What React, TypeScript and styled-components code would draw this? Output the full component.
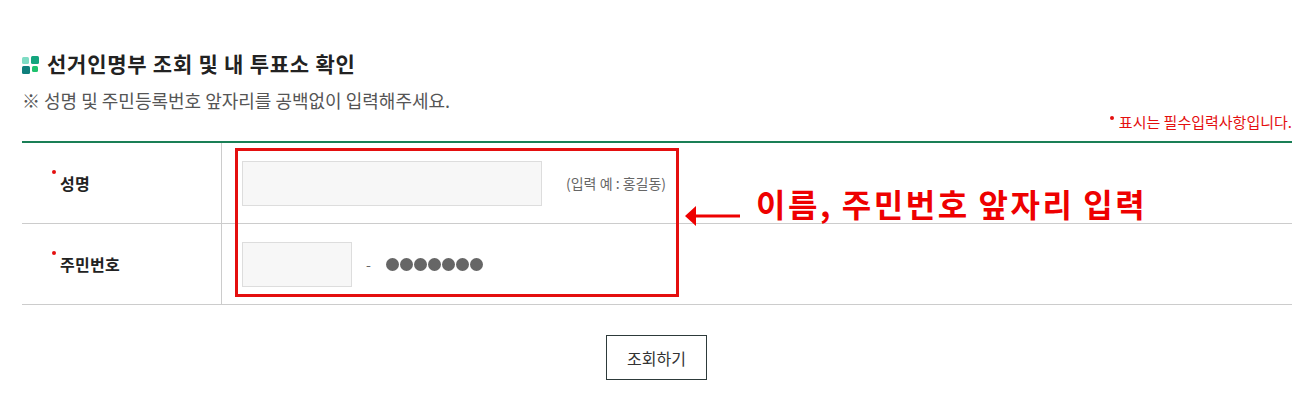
import styled, { createGlobalStyle } from 'styled-components';

const GlobalStyle = createGlobalStyle`
  html, body {
    margin: 0;
    padding: 0;
    background: #fff;
    font-family: "Noto Sans CJK KR", "Noto Sans", sans-serif;
  }
`;

export default function App() {
  return (
    <Page>
      <GlobalStyle />
      <Title>
        <TitleIcon viewBox="0 0 18 18">
          <rect x="0" y="1" width="7" height="7" rx="1.5" fill="#7fdcc4" />
          <rect x="9" y="0" width="8" height="8" rx="1.5" fill="#14a57e" />
          <rect x="0" y="10" width="8" height="8" rx="1.5" fill="#0f7f7c" />
          <rect x="10" y="10" width="6" height="6" rx="1.5" fill="#1ec26e" />
        </TitleIcon>
        선거인명부 조회 및 내 투표소 확인
      </Title>
      <Notice>※ 성명 및 주민등록번호 앞자리를 공백없이 입력해주세요.</Notice>
      <RequiredNote>
        <Dot />표시는 필수입력사항입니다.
      </RequiredNote>
      <FormTable>
        <Row>
          <LabelCell>
            <Dot />
            <LabelText>성명</LabelText>
          </LabelCell>
          <FieldCell>
            <TextBox $width={300} />
            <Hint>(입력 예 : 홍길동)</Hint>
          </FieldCell>
        </Row>
        <Row>
          <LabelCell>
            <Dot />
            <LabelText>주민번호</LabelText>
          </LabelCell>
          <FieldCell>
            <TextBox $width={110} />
            <Dash>-</Dash>
            <Masked>
              {[0, 1, 2, 3, 4, 5, 6].map((i) => (
                <MaskDot key={i} />
              ))}
            </Masked>
          </FieldCell>
        </Row>
        <Highlight />
        <Annotation>
          <ArrowIcon width="55" height="20" viewBox="0 0 55 20">
            <path d="M0 10 L11 0 V8.5 H55 V11.5 H11 V20 Z" fill="#ee0000" />
          </ArrowIcon>
          <AnnotationText>이름, 주민번호 앞자리 입력</AnnotationText>
        </Annotation>
      </FormTable>
      <Actions>
        <SearchButton>조회하기</SearchButton>
      </Actions>
    </Page>
  );
}

const Page = styled.div`
  width: 1270px;
  padding: 47px 8px 0 22px;
  height: 363px;
  overflow: hidden;
`;

const Title = styled.h2`
  display: flex;
  align-items: center;
  gap: 7px;
  margin: 0;
  height: 32px;
  font-size: 21px;
  line-height: 32px;
  font-weight: 700;
  color: #222;
  letter-spacing: 0.75px;
`;

const TitleIcon = styled.svg`
  width: 18px;
  height: 18px;
  margin-top: 4px;
`;

const Notice = styled.p`
  margin: 9px 0 0;
  height: 24px;
  font-size: 18px;
  line-height: 25px;
  color: #555;
`;

const RequiredNote = styled.div`
  display: flex;
  justify-content: flex-end;
  height: 29px;
  font-size: 15px;
  line-height: 20px;
  color: #e40f0f;
  box-sizing: border-box;
`;

const FormTable = styled.div`
  position: relative;
  border-top: 2px solid #1a7f56;
`;

const Row = styled.div`
  display: grid;
  grid-template-columns: 200px 1fr;
  height: 80px;
  border-bottom: 1px solid #ccc;
`;

const LabelCell = styled.div`
  display: flex;
  align-items: center;
  padding-left: 30px;
  border-right: 1px solid #ccc;
`;

const Dot = styled.span`
  display: inline-block;
  flex: none;
  width: 4px;
  height: 4px;
  margin: 0 2px 0 0;
  border-radius: 50%;
  background: #e40f0f;
  transform: translateY(-11px);

  ${RequiredNote} & {
    transform: translateY(4px);
    margin-right: 5px;
  }
`;

const LabelText = styled.span`
  margin-left: 2px;
  font-size: 16px;
  font-weight: 700;
  color: #222;
  letter-spacing: 0.3px;
`;

const FieldCell = styled.div`
  display: flex;
  align-items: center;
  padding-left: 20px;
`;

const TextBox = styled.div<{ $width: number }>`
  width: ${(p) => p.$width}px;
  height: 45px;
  box-sizing: border-box;
  background: #f7f7f7;
  border: 1px solid #ddd;
`;

const Hint = styled.span`
  margin-left: 24px;
  font-size: 14px;
  color: #666;
`;

const Dash = styled.span`
  margin-left: 14px;
  font-size: 14px;
  color: #666;
`;

const Masked = styled.div`
  display: flex;
  gap: 1px;
  margin-left: 15px;
`;

const MaskDot = styled.span`
  width: 13px;
  height: 13px;
  border-radius: 50%;
  background: #666;
`;

const Highlight = styled.div`
  position: absolute;
  left: 213px;
  top: 5px;
  width: 444px;
  height: 149px;
  box-sizing: border-box;
  border: 3px solid #e40f0f;
`;

const Annotation = styled.div`
  position: absolute;
  left: 663px;
  top: 41px;
  display: flex;
  align-items: flex-start;
  gap: 16px;
`;

const ArrowIcon = styled.svg`
  flex: none;
  margin-top: 22px;
`;

const AnnotationText = styled.span`
  font-size: 32px;
  line-height: 42px;
  margin-top: -2px;
  font-weight: 700;
  color: #ee0000;
  letter-spacing: 2.55px;
  word-spacing: -1px;
  white-space: nowrap;
`;

const Actions = styled.div`
  display: flex;
  justify-content: center;
  padding: 30px 1px 0 0;
`;

const SearchButton = styled.button`
  width: 101px;
  height: 45px;
  background: #fff;
  border: 1px solid #2d3a3a;
  font-family: inherit;
  font-size: 16px;
  color: #333;
  cursor: pointer;
`;
